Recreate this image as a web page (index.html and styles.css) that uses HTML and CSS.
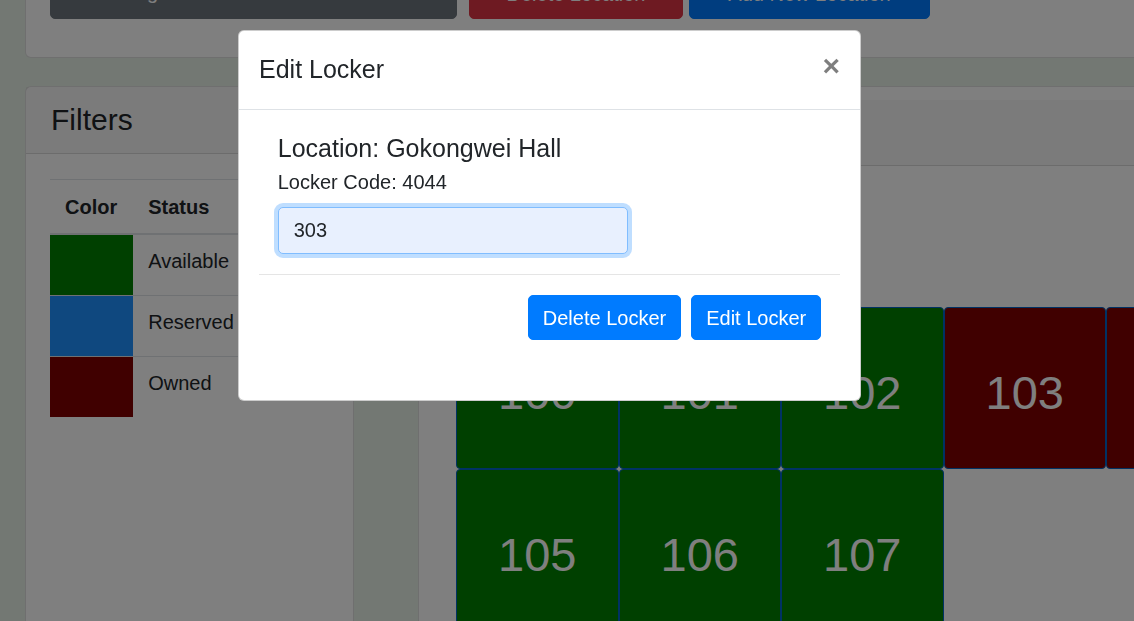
FILE: index.html
```html
<!DOCTYPE html>
<html lang="en">
<head>
<meta charset="utf-8">
<title>Lockers</title>
<link rel="stylesheet" href="styles.css">
</head>
<body>
<div class="page">
  <div class="card top-card">
    <div class="top-actions">
      <button class="btn btn-secondary btn-location">Gokongwei Hall</button>
      <button class="btn btn-danger btn-delete-location">Delete Location</button>
      <button class="btn btn-primary btn-add-location">Add New Location</button>
    </div>
  </div>

  <div class="main-row">
    <div class="card filters">
      <div class="card-header">
        <h4 class="card-title">Filters</h4>
      </div>
      <div class="filters-body">
        <table class="legend">
          <colgroup>
            <col class="col-color">
            <col>
          </colgroup>
          <thead>
            <tr><th class="th-color">Color</th><th>Status</th></tr>
          </thead>
          <tbody>
            <tr><td class="swatch-cell"><div class="swatch swatch-available"></div></td><td class="status">Available</td></tr>
            <tr><td class="swatch-cell"><div class="swatch swatch-reserved"></div></td><td class="status">Reserved</td></tr>
            <tr><td class="swatch-cell"><div class="swatch swatch-owned"></div></td><td class="status">Owned</td></tr>
          </tbody>
        </table>
      </div>
    </div>

    <div class="card lockers">
      <div class="lockers-strip"></div>
      <div class="lockers-head"></div>
      <div class="lockers-body">
        <div class="locker-grid">
          <div class="locker available">100</div>
          <div class="locker available">101</div>
          <div class="locker available">102</div>
          <div class="locker owned">103</div>
          <div class="locker owned">104</div>
          <div class="locker available">105</div>
          <div class="locker available">106</div>
          <div class="locker available">107</div>
        </div>
      </div>
    </div>
  </div>
</div>

<div class="backdrop"></div>

<div class="modal">
  <div class="modal-header">
    <h5 class="modal-title">Edit Locker</h5>
    <button class="close" type="button">&times;</button>
  </div>
  <div class="modal-body">
    <div class="inner">
      <div class="location-line">Location: Gokongwei Hall</div>
      <div class="code-line">Locker Code: 4044</div>
      <input class="locker-input" type="text" value="303">
    </div>
    <hr class="divider">
    <div class="inner actions">
      <button class="btn btn-primary btn-modal">Delete Locker</button>
      <button class="btn btn-primary btn-modal">Edit Locker</button>
    </div>
  </div>
</div>
</body>
</html>
```

FILE: styles.css
```css
* { box-sizing: border-box; }

html, body {
  margin: 0;
  height: 100%;
  overflow: hidden;
}

body {
  background: #e6f0e6;
  font-family: "Liberation Sans", Arial, sans-serif;
  font-size: 20px;
  line-height: 1.5;
  color: #212529;
}

.page {
  width: 1330px;
  margin-top: -54px;
  padding-left: 25px;
}

.card {
  background: #fff;
  border: 1px solid rgba(0, 0, 0, 0.125);
  border-radius: 6px;
}

.top-actions {
  display: flex;
  padding: 25px 24px 38px;
}

.btn {
  font: inherit;
  font-size: 20px;
  line-height: 30px;
  border: 1px solid transparent;
  border-radius: 5px;
  color: #fff;
  padding: 7.5px 14px;
  text-align: center;
  cursor: pointer;
}

.btn-secondary { background: #6c757d; border-color: #6c757d; }
.btn-danger { background: #dc3545; border-color: #dc3545; }
.btn-primary { background: #007bff; border-color: #007bff; }

.top-actions .btn {
  padding-top: 5.5px;
  padding-bottom: 9.5px;
}

.top-actions .btn-location {
  width: 407px;
  text-align: left;
  padding-left: 37px;
  padding-top: 4px;
  padding-bottom: 11px;
}
.btn-delete-location { width: 214px; margin-left: 12px; }
.btn-add-location { width: 241px; margin-left: 6px; }

.main-row {
  display: flex;
  gap: 64px;
  margin-top: 28px;
  height: 700px;
}

.filters {
  width: 329px;
  flex: none;
}

.card-header {
  padding: 15px 25px;
  background: rgba(0, 0, 0, 0.03);
  border-bottom: 1px solid rgba(0, 0, 0, 0.125);
}

.card-title {
  margin: 0;
  font-size: 30px;
  line-height: 36px;
  font-weight: 400;
}

.filters-body {
  padding: 25px 0 25px 24px;
}

.legend {
  width: 280px;
  border-collapse: collapse;
}

.col-color { width: 83px; }

.legend th,
.legend td {
  border-top: 1px solid #dee2e6;
  text-align: left;
  vertical-align: top;
  padding: 11.5px 16px 11.5px 15px;
}

.legend thead th {
  border-bottom: 2px solid #dee2e6;
  font-weight: 700;
}

.legend .th-color { text-align: center; }

.legend .swatch-cell { padding: 0; }

.swatch { height: 60px; }
.swatch-available { background: #008000; }
.swatch-reserved { background: #1e90ff; }
.swatch-owned { background: #800000; }

.legend .status { padding-top: 11px; }

.lockers {
  flex: 1;
}

.lockers-strip { height: 13px; }

.lockers-head {
  height: 66px;
  background: rgba(0, 0, 0, 0.03);
  border-bottom: 1px solid rgba(0, 0, 0, 0.125);
}

.lockers-body {
  padding: 141px 0 0 37px;
}

.locker-grid {
  display: grid;
  grid-template-columns: repeat(5, 162.5px);
  grid-auto-rows: 162px;
}

.locker {
  border: 1px solid #0064c8;
  border-radius: 4px;
  color: #fff;
  font-size: 47px;
  display: flex;
  align-items: center;
  justify-content: center;
  padding-top: 10px;
}

.locker.available { background: #008000; }
.locker.owned { background: #800000; }

.backdrop {
  position: fixed;
  inset: 0;
  background: rgba(0, 0, 0, 0.5);
}

.modal {
  position: fixed;
  top: 30px;
  left: 238px;
  width: 623px;
  background: #fff;
  border: 1px solid rgba(0, 0, 0, 0.2);
  border-radius: 6px;
}

.modal-header {
  display: flex;
  align-items: flex-start;
  padding: 20px;
  border-bottom: 1px solid #dee2e6;
}

.modal-title {
  margin: 0;
  font-size: 25px;
  line-height: 1.5;
  font-weight: 400;
}

.close {
  margin: -20px -20px -20px auto;
  padding: 20px;
  background: transparent;
  border: 0;
  font-family: inherit;
  font-size: 30px;
  font-weight: 700;
  line-height: 1;
  color: #000;
  opacity: 0.5;
  text-shadow: 0 1px 0 #fff;
  cursor: pointer;
}

.modal-body {
  padding: 20px;
}

.inner {
  padding: 0 18.75px;
}

.location-line {
  font-size: 25px;
  line-height: 1.5;
}

.code-line {
  font-size: 20px;
  line-height: 1.5;
}

.locker-input {
  display: block;
  margin-top: 10px;
  width: 350px;
  height: 47px;
  padding: 0 15px;
  font: inherit;
  font-size: 20px;
  color: #212529;
  background: #e8f0fe;
  border: 1px solid #80bdff;
  border-radius: 5px;
  box-shadow: 0 0 0 4px rgba(0, 123, 255, 0.25);
  outline: none;
}

.divider {
  margin: 20px 0 0;
  border: 0;
  border-top: 1px solid rgba(0, 0, 0, 0.1);
}

.actions {
  display: flex;
  justify-content: flex-end;
  gap: 10px;
  margin-top: 20px;
  margin-bottom: 40px;
}

.btn-modal {
  padding: 6.5px 14px;
}
```
